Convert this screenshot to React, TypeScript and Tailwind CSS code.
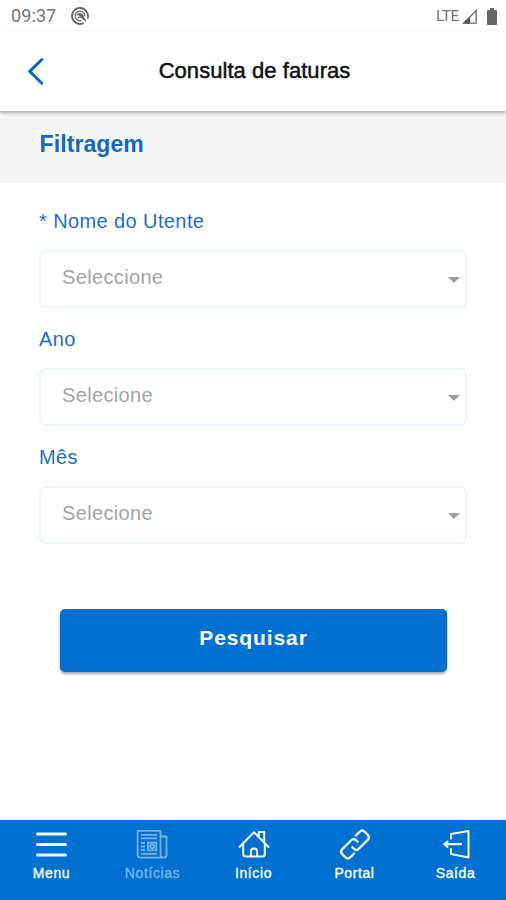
import React from 'react';

interface SelectFieldProps {
  label: string;
  placeholder: string;
}

const StatusBar: React.FC = () => (
  <div className="flex h-8 items-center justify-between pl-[11px] pr-[9px] text-[#757575]">
    <div className="flex items-center">
      <span className="w-[60px] font-['Roboto',sans-serif] text-[18px] leading-8 tracking-[0.1px]">09:37</span>
      <svg width="18" height="18" viewBox="0 0 18 18" fill="none" stroke="#666">
        <path d="M12.6 16.1A8 8 0 1 1 16.6 11.4" strokeWidth="1.8" />
        <path d="M10.5 13.6A4.9 4.9 0 1 1 13.9 9.3" strokeWidth="1.2" />
        <path d="M5.8 7.6A4 4 0 0 1 12.6 9.6L14.8 14.2L9.8 10.6Q8.6 7.8 5.8 7.6Z" fill="#666" strokeWidth="0.8" />
        <circle cx="7.8" cy="10.6" r="1" fill="#666" stroke="none" />
      </svg>
    </div>
    <div className="flex items-center">
      <span className="w-[26px] font-['Roboto',sans-serif] text-[15.5px] leading-8 tracking-[-0.5px]">LTE</span>
      <svg width="15" height="15" viewBox="0 0 15 15" fill="none">
        <path d="M1.8 14.2H14.2V1.5Z" stroke="#666" strokeWidth="1.3" />
        <path d="M0.5 14.8H8V7.2Z" fill="#5c5c5c" />
      </svg>
      <svg className="ml-[10px]" width="10" height="17" viewBox="0 0 10 17" fill="#666">
        <path d="M3 0H7V2H9.3Q10 2 10 2.8V16.2Q10 17 9.2 17H0.8Q0 17 0 16.2V2.8Q0 2 0.7 2H3Z" />
      </svg>
    </div>
  </div>
);

const SelectField: React.FC<SelectFieldProps> = ({ label, placeholder }) => (
  <div className="flex h-[118px] flex-col">
    <label className="h-[41px] text-[20px] leading-6 tracking-[0.4px] text-[#1f6cc7]">{label}</label>
    <button className="flex h-[58px] w-[428px] items-center justify-between rounded-md border-2 border-[#ebf5fd] bg-white pl-[21px] pr-[5px]">
      <span className="-mt-[5px] text-[20px] leading-6 tracking-[0.35px] text-[#a3a3a3]">{placeholder}</span>
      <svg className="mt-[2px]" width="12" height="6" viewBox="0 0 12 6">
        <path d="M0 0H12L6 6Z" fill="#9b9b9b" />
      </svg>
    </button>
  </div>
);

const MenuIcon = () => (
  <svg width="34" height="32" viewBox="0 0 34 32" stroke="currentColor" strokeWidth="3" strokeLinecap="round">
    <path d="M2.5 5H30.5M2.5 15.5H30.5M2.5 26H30.5" />
  </svg>
);

const NewsIcon = () => (
  <svg width="34" height="32" viewBox="0 0 34 32" fill="none" stroke="currentColor" strokeWidth="1.8" strokeLinejoin="round">
    <path d="M27.5 28.6H4.3Q1.6 28.6 1.6 25.9V1.8H24.5V25.9Q24.5 28.6 27.5 28.6Q30.5 28.6 30.5 25.9V7.5H24.5" />
    <path d="M5 5.8H21M5 9.4H21M5 14H9M5 17.5H9M5 21H9M5 24.8H21" />
    <path d="M12 13.7H20.3V21.3H12Z" />
    <circle cx="16.2" cy="17.5" r="2" />
  </svg>
);

const HomeIcon = () => (
  <svg width="34" height="32" viewBox="0 0 34 32" fill="none" stroke="currentColor" strokeWidth="2" strokeLinecap="round" strokeLinejoin="round">
    <path d="M2.5 18L17 3.3L31.5 18" />
    <path d="M6.2 15.5V25Q6.2 27.5 9 27.5H25Q27.8 27.5 27.8 25V15.5" />
    <path d="M21.8 8V3H27.2V13.5" />
    <path d="M13.9 27V22.3Q13.9 19.5 17 19.5Q20.1 19.5 20.1 22.3V27" />
  </svg>
);

const LinkIcon = () => (
  <svg width="34" height="32" viewBox="0 0 34 32" fill="none" stroke="currentColor" strokeWidth="2.4" strokeLinecap="round" strokeLinejoin="round">
    <g transform="rotate(-45 17 15.5)">
      <path d="M20.8 15.3V13.3Q20.8 9.8 17.3 9.8H4.7Q1.2 9.8 1.2 13.3V17.7Q1.2 21.2 4.7 21.2H10" />
      <path d="M13.2 15.7V17.7Q13.2 21.2 16.7 21.2H29.3Q32.8 21.2 32.8 17.7V13.3Q32.8 9.8 29.3 9.8H24" />
    </g>
  </svg>
);

const ExitIcon = () => (
  <svg width="34" height="32" viewBox="0 0 34 32" fill="none" stroke="currentColor" strokeWidth="2" strokeLinecap="round" strokeLinejoin="round">
    <path d="M12 9.5V5L29.5 2V28.4L12 25V20" />
    <path d="M22 15.2H6M8.5 12.6L5.3 15.2L8.5 17.8" strokeWidth="2.2" />
  </svg>
);

const tabs = [
  { icon: MenuIcon, label: 'Menu' },
  { icon: NewsIcon, label: 'Notícias', muted: true },
  { icon: HomeIcon, label: 'Início' },
  { icon: LinkIcon, label: 'Portal' },
  { icon: ExitIcon, label: 'Saída' },
];

const App: React.FC = () => {
  return (
    <div className="flex h-[900px] w-[506px] flex-col overflow-hidden bg-white font-['Liberation_Sans',Arial,sans-serif]">
      <StatusBar />

      {/* Header */}
      <header className="z-10 grid h-[79px] shrink-0 grid-cols-[1fr_auto_1fr] items-center bg-white pb-[2px] pl-[3px] shadow-[0_2px_3px_0_rgba(0,0,0,0.3)]">
        <button className="pl-[24px]" aria-label="Voltar">
          <svg width="18" height="28" viewBox="0 0 18 28" fill="none" stroke="#0b68c8" strokeWidth="3" strokeLinecap="round" strokeLinejoin="round">
            <path d="M14.8 2.6L2.7 14.4L14.8 26.2" />
          </svg>
        </button>
        <h1 className="text-[22px] leading-8 tracking-[0.05px] text-[#111] [-webkit-text-stroke:0.5px_#111]">
          Consulta de faturas
        </h1>
      </header>

      <div className="flex h-[72px] shrink-0 items-start bg-[#f5f5f5] px-[39.5px] pt-[19px]">
        <h2 className="text-[23px] font-bold leading-7 tracking-[0.1px] text-[#1468c5]">Filtragem</h2>
      </div>

      {/* Filters */}
      <main className="flex flex-1 flex-col pl-[39px] pt-[26px]">
        <SelectField label="* Nome do Utente" placeholder="Seleccione" />
        <SelectField label="Ano" placeholder="Selecione" />
        <SelectField label="Mês" placeholder="Selecione" />
        <button className="ml-[21px] mt-[46px] h-[63px] w-[387px] rounded-[5px] bg-[#0070d1] pb-[5px] text-[21px] font-bold tracking-[0.9px] text-white shadow-[0_2px_3px_rgba(0,0,0,0.35)]">
          Pesquisar
        </button>
      </main>

      {/* Bottom tabs */}
      <nav className="grid h-[80px] shrink-0 grid-cols-5 bg-[#0070d1] pl-[1px] pt-[9px]">
        {tabs.map(tab => (
          <a
            key={tab.label}
            className={`flex flex-col items-center ${tab.muted ? 'text-[#74b1e8]' : 'text-[#f2f8fe]'}`}
          >
            <tab.icon />
            <span className="mt-[2px] text-[14px] leading-5 tracking-[0.6px] [-webkit-text-stroke:0.4px_currentColor]">
              {tab.label}
            </span>
          </a>
        ))}
      </nav>
    </div>
  );
};

export default App;
